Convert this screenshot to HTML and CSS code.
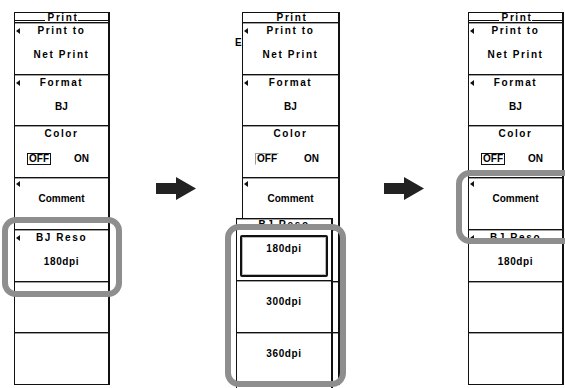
FILE: index.html
```html
<!DOCTYPE html>
<html lang="en">
<head>
  <meta charset="UTF-8">
  <title>Print - BJ Reso</title>
  <link rel="stylesheet" href="styles.css">
</head>
<body>
  <div class="stage">

    <div class="panel">
      <div class="title"><span class="rule"></span><span class="ttl">Print</span><span class="rule"></span></div>
      <div class="sec">
        <div class="head"><i class="tri"></i><span>Print to</span></div>
        <div class="val">Net Print</div>
      </div>
      <div class="sec">
        <div class="head"><i class="tri"></i><span>Format</span></div>
        <div class="val tight">BJ</div>
      </div>
      <div class="sec">
        <div class="head"><span>Color</span></div>
        <div class="toggle"><span class="off">OFF</span><span class="on">ON</span></div>
      </div>
      <div class="sec">
        <div class="head short"><i class="tri"></i></div>
        <div class="label tight">Comment</div>
      </div>
      <div class="sec">
        <div class="head"><i class="tri"></i><span>BJ Reso</span></div>
        <div class="val dpi">180dpi</div>
      </div>
      <div class="sec"></div>
      <div class="sec"></div>
    </div>

    <div class="gap">
      <svg class="arrow" width="40" height="23" viewBox="0 0 40 23"><path d="M0 6H20V0L40 11.5L20 23V17H0Z" fill="#222"/></svg>
    </div>

    <div class="panel mid">
      <div class="title plain"><span class="ttl">Print</span></div>
      <div class="sec">
        <div class="head"><i class="tri"></i><span>Print to</span></div>
        <div class="val">Net Print</div>
      </div>
      <div class="sec">
        <div class="head"><i class="tri"></i><span>Format</span></div>
        <div class="val tight">BJ</div>
      </div>
      <div class="sec">
        <div class="head"><span>Color</span></div>
        <div class="toggle"><span class="off faint">OFF</span><span class="on">ON</span></div>
      </div>
      <div class="sec">
        <div class="head short"><i class="tri"></i></div>
        <div class="label tight">Comment</div>
      </div>
      <div class="sec"></div>
      <div class="sec"></div>
      <div class="sec"></div>
    </div>

    <div class="gap b">
      <svg class="arrow" width="40" height="23" viewBox="0 0 40 23"><path d="M0 6H20V0L40 11.5L20 23V17H0Z" fill="#222"/></svg>
    </div>

    <div class="panel">
      <div class="title"><span class="rule"></span><span class="ttl">Print</span><span class="rule"></span></div>
      <div class="sec">
        <div class="head"><i class="tri"></i><span>Print to</span></div>
        <div class="val">Net Print</div>
      </div>
      <div class="sec">
        <div class="head"><i class="tri"></i><span>Format</span></div>
        <div class="val tight">BJ</div>
      </div>
      <div class="sec">
        <div class="head"><span>Color</span></div>
        <div class="toggle"><span class="off">OFF</span><span class="on">ON</span></div>
      </div>
      <div class="sec">
        <div class="head short"><i class="tri"></i></div>
        <div class="label tight">Comment</div>
      </div>
      <div class="sec">
        <div class="head"><i class="tri"></i><span>BJ Reso</span></div>
        <div class="val dpi">180dpi</div>
      </div>
      <div class="sec"></div>
      <div class="sec"></div>
    </div>

    <!-- stray key label left of the middle panel -->
    <span class="stray">E</span>

    <!-- drop-down list opened from BJ Reso -->
    <div class="popup">
      <div class="pop-head">BJ Reso</div>
      <div class="pick"><div class="sel">180dpi</div></div>
      <div class="opt">300dpi</div>
      <div class="opt last">360dpi</div>
    </div>

    <div class="ring a"></div>
    <div class="ring b"></div>
    <div class="ring c"></div>
  </div>
</body>
</html>
```

FILE: styles.css
```css
body { margin: 0; background: #fff; color: #000; font-family: "Liberation Sans", Arial, sans-serif; font-weight: bold; font-size: 10px; letter-spacing: 1.6px; }

.stage { position: relative; display: flex; width: 565px; height: 388px; padding: 12px 0 0 14px; box-sizing: border-box; overflow: hidden; }

.panel { width: 96px; height: 373px; flex-shrink: 0; display: flex; flex-direction: column; border-left: 1px solid #111; border-right: 2px solid #111; box-sizing: border-box; }
.panel.mid { width: 98px; }

.gap { width: 132px; flex-shrink: 0; display: flex; justify-content: center; align-items: flex-start; padding-top: 165px; box-sizing: border-box; }
.gap.b { width: 128px; }

.title { height: 10px; flex-shrink: 0; border-top: 1px solid #111; display: flex; align-items: flex-end; box-sizing: border-box; }
.title.plain { justify-content: center; }
.ttl { line-height: 9px; padding: 0 0 0 3px; }
.rule { flex: 1; border-bottom: 1px solid #111; margin-bottom: 1px; }

.sec { flex: 1; display: flex; flex-direction: column; border-top: 1px solid #111; box-shadow: inset 0 1px 0 #a0a0a0; }
.sec:last-child { border-bottom: 1px solid #111; }

.head { display: grid; grid-template-columns: 8px 1fr 8px; align-items: center; height: 16px; line-height: 10px; }
.head span { grid-column: 2; text-align: center; }
.head.short { height: 11px; }

.tri { width: 0; height: 0; margin-left: 1px; border-right: 4px solid #111; border-top: 3px solid transparent; border-bottom: 3px solid transparent; }

.val { flex: 1; display: flex; align-items: center; justify-content: center; padding-bottom: 2px; line-height: 10px; }
.label { height: 20px; line-height: 20px; text-align: center; }
.tight { letter-spacing: 0; }
.dpi { letter-spacing: 0.6px; }

.toggle { flex: 1; display: flex; align-items: center; justify-content: space-between; padding: 0 19px 2px 12px; line-height: 10px; letter-spacing: 0; }
.off { border: 1px solid #111; padding: 0 1px; }
.off.faint { border-color: #999 transparent transparent #999; }

.stray { position: absolute; left: 235px; top: 38px; line-height: 10px; letter-spacing: 0; }

.popup { position: absolute; left: 236px; top: 218px; width: 97px; border-left: 1px solid #111; border-right: 2px solid #111; box-sizing: border-box; background: #fff; }
.pop-head { height: 14px; border-top: 1px solid #111; box-shadow: inset 0 1px 0 #a0a0a0; text-align: center; line-height: 10px; padding-top: 1px; overflow: hidden; box-sizing: border-box; }
.pick { height: 48px; padding: 3px; box-sizing: border-box; }
.sel { height: 100%; border: 2px solid #111; border-radius: 2px; box-shadow: inset 0 0 0 1px #bbb; padding-top: 7px; line-height: 10px; text-align: center; letter-spacing: 0.6px; box-sizing: border-box; }
.opt { height: 52px; border-top: 1px solid #111; box-shadow: inset 0 1px 0 #a0a0a0; padding-top: 16px; line-height: 10px; text-align: center; letter-spacing: 0.6px; box-sizing: border-box; }
.opt.last { height: 56px; }

.ring { position: absolute; border: 6px solid #8e8e8e; border-radius: 14px; box-sizing: border-box; }
.ring.a { left: 2px; top: 217px; width: 120px; height: 80px; }
.ring.b { left: 225px; top: 224px; width: 121px; height: 163px; }
.ring.c { left: 456px; top: 170px; width: 122px; height: 74px; }
```
